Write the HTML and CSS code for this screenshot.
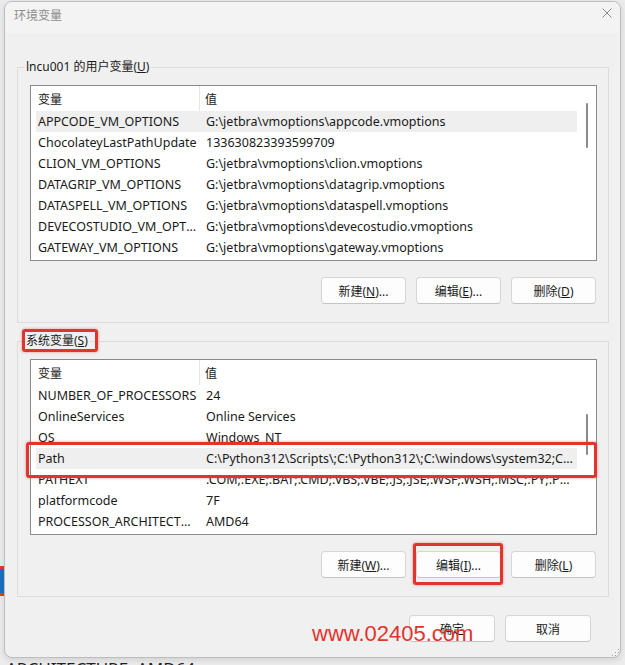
FILE: index.html
```html
<!DOCTYPE html>
<html lang="zh-CN">
<head>
    <meta charset="UTF-8">
    <meta name="viewport" content="width=device-width, initial-scale=1.0">
    <title>环境变量</title>
    <link rel="stylesheet" href="styles.css">
</head>
<body>
    <!-- bits of the window behind the dialog -->
    <div class="behind-mark"></div>
    <div class="behind-text">ARCHITECTURE&nbsp;&nbsp;AMD64</div>

    <div class="dialog">
        <div class="titlebar">
            <span class="title">环境变量</span>
            <svg class="close" width="10" height="10" viewBox="0 0 10 10">
                <path d="M0.5 0.5 L9.5 9.5 M9.5 0.5 L0.5 9.5" stroke="#8a8a8a" stroke-width="1" fill="none"/>
            </svg>
        </div>

        <div class="dialog-body">
            <div class="group group-user">
                <div class="group-label">lncu001 的用户变量(<u>U</u>)</div>
                <div class="list">
                    <div class="list-main">
                        <div class="list-head">
                            <span class="col-name">变量</span>
                            <span class="col-value">值</span>
                        </div>
                        <div class="row selected"><span class="col-name">APPCODE_VM_OPTIONS</span><span class="col-value">G:\jetbra\vmoptions\appcode.vmoptions</span></div>
                        <div class="row"><span class="col-name">ChocolateyLastPathUpdate</span><span class="col-value">133630823393599709</span></div>
                        <div class="row"><span class="col-name">CLION_VM_OPTIONS</span><span class="col-value">G:\jetbra\vmoptions\clion.vmoptions</span></div>
                        <div class="row"><span class="col-name">DATAGRIP_VM_OPTIONS</span><span class="col-value">G:\jetbra\vmoptions\datagrip.vmoptions</span></div>
                        <div class="row"><span class="col-name">DATASPELL_VM_OPTIONS</span><span class="col-value">G:\jetbra\vmoptions\dataspell.vmoptions</span></div>
                        <div class="row"><span class="col-name">DEVECOSTUDIO_VM_OPTIONS</span><span class="col-value">G:\jetbra\vmoptions\devecostudio.vmoptions</span></div>
                        <div class="row"><span class="col-name">GATEWAY_VM_OPTIONS</span><span class="col-value">G:\jetbra\vmoptions\gateway.vmoptions</span></div>
                    </div>
                    <div class="scrollbar"><div class="thumb thumb-user"></div></div>
                </div>
                <div class="buttons">
                    <button>新建(<u>N</u>)...</button>
                    <button>编辑(<u>E</u>)...</button>
                    <button>删除(<u>D</u>)</button>
                </div>
            </div>

            <div class="group group-system">
                <div class="group-label">系统变量(<u>S</u>)</div>
                <div class="list">
                    <div class="list-main">
                        <div class="list-head">
                            <span class="col-name">变量</span>
                            <span class="col-value">值</span>
                        </div>
                        <div class="row"><span class="col-name">NUMBER_OF_PROCESSORS</span><span class="col-value">24</span></div>
                        <div class="row"><span class="col-name">OnlineServices</span><span class="col-value">Online Services</span></div>
                        <div class="row"><span class="col-name">OS</span><span class="col-value">Windows_NT</span></div>
                        <div class="row selected"><span class="col-name">Path</span><span class="col-value">C:\Python312\Scripts\;C:\Python312\;C:\windows\system32;C:\windows;C:\windows\System32\Wbem</span></div>
                        <div class="row"><span class="col-name">PATHEXT</span><span class="col-value">.COM;.EXE;.BAT;.CMD;.VBS;.VBE;.JS;.JSE;.WSF;.WSH;.MSC;.PY;.PYW</span></div>
                        <div class="row"><span class="col-name">platformcode</span><span class="col-value">7F</span></div>
                        <div class="row"><span class="col-name">PROCESSOR_ARCHITECTURE</span><span class="col-value">AMD64</span></div>
                    </div>
                    <div class="scrollbar"><div class="thumb thumb-system"></div></div>
                </div>
                <div class="buttons">
                    <button>新建(<u>W</u>)...</button>
                    <button>编辑(<u>I</u>)...</button>
                    <button>删除(<u>L</u>)</button>
                </div>
            </div>

            <div class="footer">
                <button class="wide">确定</button>
                <button class="wide">取消</button>
            </div>
        </div>

        <!-- red annotations drawn on top of the screenshot -->
        <div class="mark mark-label"></div>
        <div class="mark mark-path"></div>
        <div class="mark mark-edit"></div>
        <div class="watermark">www.02405.com</div>

        <svg class="grip" width="9" height="9" viewBox="0 0 9 9">
            <rect x="7" y="1" width="1" height="1" fill="#a0a0a0"/>
            <rect x="4" y="4" width="1" height="1" fill="#a0a0a0"/>
            <rect x="7" y="4" width="1" height="1" fill="#a0a0a0"/>
            <rect x="1" y="7" width="1" height="1" fill="#a0a0a0"/>
            <rect x="4" y="7" width="1" height="1" fill="#a0a0a0"/>
            <rect x="7" y="7" width="1" height="1" fill="#a0a0a0"/>
        </svg>
    </div>
</body>
</html>
```

FILE: styles.css
```css
* {
    box-sizing: border-box;
}
html, body {
    margin: 0;
}
body {
    position: relative;
    width: 625px;
    height: 665px;
    overflow: hidden;
    padding: 1px 0 0 4px;
    background: #ececec;
    font-family: "Noto Sans", "Noto Sans CJK SC", sans-serif;
    font-size: 12px;
    color: #1a1a1a;
}
.behind-text {
    position: absolute;
    left: 6px;
    top: 657px;
    font-size: 17px;
    color: #222;
    white-space: nowrap;
}
.behind-mark {
    position: absolute;
    left: 0;
    top: 566px;
    width: 4px;
    height: 30px;
    background: #1d6fc4;
    border-top: 3px solid #e23a30;
    border-bottom: 3px solid #e23a30;
}
.dialog {
    position: relative;
    z-index: 1;
    width: 617px;
    height: 657px;
    background: #f0f0f0;
    border: 1px solid #bdbdbd;
    border-radius: 8px;
    overflow: hidden;
    box-shadow: 0 2px 6px rgba(0,0,0,0.12);
}
.titlebar {
    display: flex;
    align-items: flex-start;
    height: 31px;
    padding: 6px 8px 0 9px;
    background: #f3f3f3;
    line-height: 16px;
}
.title {
    color: #8c8c8c;
}
.close {
    margin-left: auto;
}
.dialog-body {
    padding: 0 11px 0 12px;
}
.group {
    border: 1px solid #dcdcdc;
    padding: 0 11px 18px 12px;
}
.group-user {
    margin-top: 34px;
}
.group-system {
    margin-top: 18px;
}
.group-label {
    display: table;
    margin: -9px 0 0 -6px;
    padding: 0 2px;
    line-height: 16px;
    background: #f0f0f0;
}
.list {
    display: flex;
    height: 176px;
    margin-top: 10px;
    background: #fff;
    border: 1px solid #8a8a8a;
    overflow: hidden;
}
.list-main {
    flex: 1;
    min-width: 0;
}
.list-head {
    display: flex;
    height: 25px;
    align-items: center;
}
.list-head .col-name {
    width: 169px;
    padding-left: 7px;
    align-self: stretch;
    display: flex;
    align-items: center;
    border-right: 1px solid #e5e5e5;
}
.list-head .col-value {
    padding-left: 5px;
}
.row {
    display: flex;
    height: 21px;
    margin-left: 5px;
    align-items: center;
    white-space: nowrap;
    font-size: 12.5px;
}
.row.selected {
    background: #efefef;
}
.row .col-name {
    width: 165px;
    flex: none;
    padding: 0 3px 0 2px;
    overflow: hidden;
    text-overflow: ellipsis;
}
.row .col-value {
    flex: 1;
    min-width: 0;
    padding: 0 4px 0 5px;
    overflow: hidden;
    text-overflow: ellipsis;
}
.scrollbar {
    width: 19px;
    flex: none;
    padding-left: 9px;
}
.thumb {
    width: 2px;
    border-radius: 1px;
    background: #8a8a8a;
}
.thumb-user {
    margin-top: 17px;
    height: 45px;
}
.thumb-system {
    margin-top: 54px;
    height: 41px;
}
.buttons, .footer {
    display: flex;
    justify-content: flex-end;
    gap: 10px;
}
.buttons {
    margin-top: 16px;
    padding-right: 1px;
}
.footer {
    margin-top: 18px;
    padding-right: 18px;
}
button {
    width: 85px;
    height: 27px;
    padding: 0;
    font: inherit;
    color: #1a1a1a;
    background: #fdfdfd;
    border: 1px solid #d6d6d6;
    border-bottom-color: #c4c4c4;
    border-radius: 4px;
}
button.wide {
    width: 86px;
}
.mark {
    position: absolute;
    border: 3px solid #e0352c;
    border-radius: 3px;
    box-shadow: 0 0 3px rgba(224,53,44,0.55);
}
.mark-label {
    left: 17px;
    top: 327px;
    width: 76px;
    height: 23px;
}
.mark-path {
    left: 21px;
    top: 440px;
    width: 571px;
    height: 36px;
}
.mark-edit {
    left: 408px;
    top: 541px;
    width: 90px;
    height: 42px;
}
.watermark {
    position: absolute;
    left: 307px;
    top: 621px;
    font-family: "Liberation Sans", Arial, sans-serif;
    font-size: 22px;
    line-height: 22px;
    color: #e0352c;
}
.grip {
    position: absolute;
    left: 606px;
    top: 646px;
}
```
